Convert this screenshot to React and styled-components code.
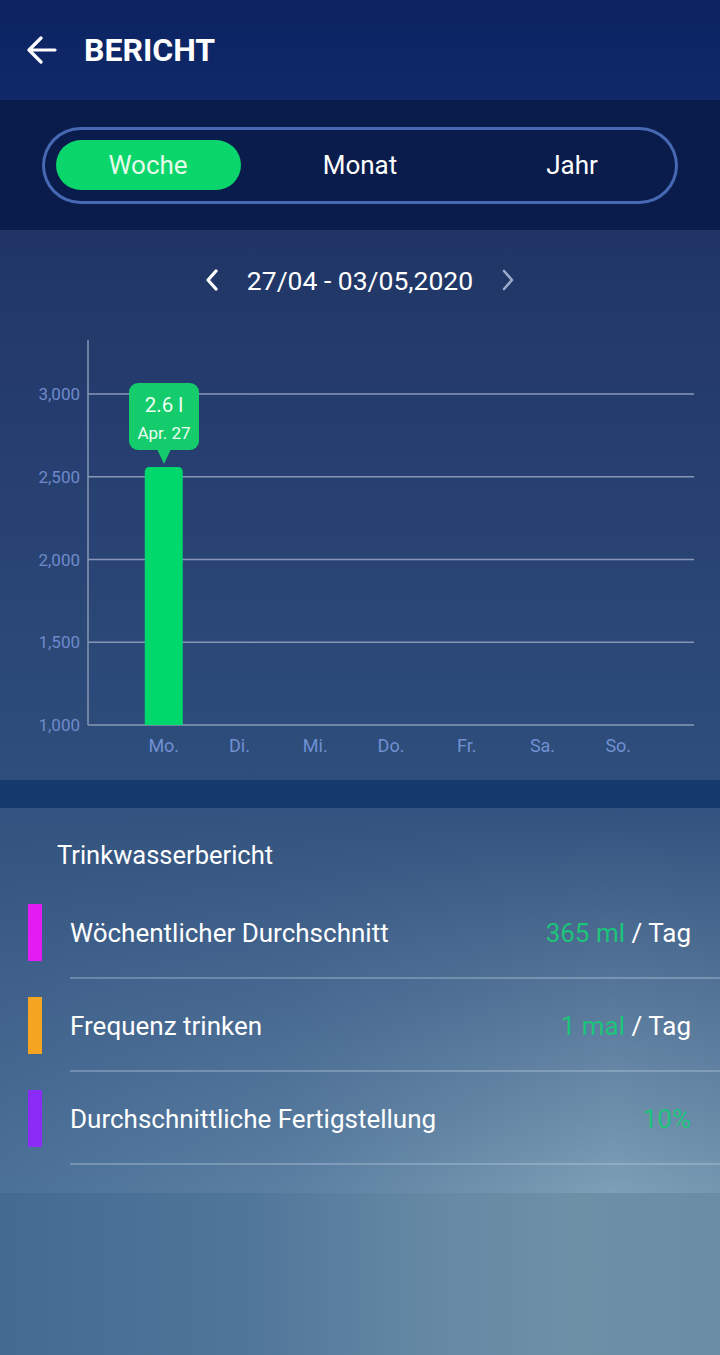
import styled, { createGlobalStyle } from "styled-components";

const GlobalStyle = createGlobalStyle`
  body {
    margin: 0;
    font-family: Roboto, "Noto Sans", sans-serif;
    background: #5d809c;
  }
`;

const days = ["Mo.", "Di.", "Mi.", "Do.", "Fr.", "Sa.", "So."];
const ticks = [3000, 2500, 2000, 1500, 1000];
const stats = [
  { color: "#e21cf2", label: "Wöchentlicher Durchschnitt", value: "365 ml", unit: "/ Tag" },
  { color: "#f6a523", label: "Frequenz trinken", value: "1 mal", unit: "/ Tag" },
  { color: "#8b2cf6", label: "Durchschnittliche Fertigstellung", value: "10%" },
];

// chart geometry (svg coords, svg starts at page y=300)
const plotLeft = 88;
const plotRight = 694;
const yFor = (v) => 425 - ((v - 1000) / 2000) * 331;
const slot = (plotRight - plotLeft) / 8;

const App = () => {
  const barX = plotLeft + slot - 19;
  const barTop = 167;

  return (
    <Page>
      <GlobalStyle />
      <Header>
        <svg width="30" height="28" viewBox="0 0 30 28">
          <path d="M28 14H3M14 2L2 14l12 12" fill="none" stroke="#fff" strokeWidth="3.2" strokeLinecap="round" strokeLinejoin="round" />
        </svg>
        <Title>BERICHT</Title>
      </Header>

      <SegmentBar>
        <Segment>
          <SegmentItem active>Woche</SegmentItem>
          <SegmentItem>Monat</SegmentItem>
          <SegmentItem>Jahr</SegmentItem>
        </Segment>
      </SegmentBar>

      <ChartPanel>
        <DateNav>
          <svg width="14" height="22" viewBox="0 0 14 22">
            <path d="M11 2L3 11l8 9" fill="none" stroke="#fff" strokeWidth="3.2" strokeLinecap="round" strokeLinejoin="round" />
          </svg>
          <DateText>27/04 - 03/05,2020</DateText>
          <svg width="14" height="22" viewBox="0 0 14 22">
            <path d="M3 2l8 9-8 9" fill="none" stroke="#9aabc9" strokeWidth="2.6" strokeLinecap="round" strokeLinejoin="round" />
          </svg>
        </DateNav>
        <svg width="720" height="480" viewBox="0 0 720 480">
          <line x1={plotLeft} y1="40" x2={plotLeft} y2="425" stroke="#8797b6" strokeWidth="1.5" />
          {ticks.map((t) => (
            <g key={t}>
              <line x1={plotLeft} y1={yFor(t)} x2={plotRight} y2={yFor(t)} stroke="#8797b6" strokeWidth="1.5" />
              <text x="80" y={yFor(t) + 6} textAnchor="end" fill="#6e8acb" fontSize="17" fontFamily="Roboto, sans-serif">
                {t.toLocaleString("en-US")}
              </text>
            </g>
          ))}
          <path
            d={`M${barX} 425V${barTop + 5}q0-5 5-5h28q5 0 5 5V425z`}
            fill="#00d86b"
          />
          {days.map((d, i) => (
            <text key={d} x={plotLeft + slot * (i + 1)} y="452" textAnchor="middle" fill="#7090d2" fontSize="18" fontFamily="Roboto, sans-serif">
              {d}
            </text>
          ))}
          <rect x="129" y="83" width="70" height="67" rx="9" fill="#14cc6c" />
          <path d="M157 149h14l-7 15z" fill="#14cc6c" />
          <text x="164" y="112" textAnchor="middle" fill="#ecfff2" fontSize="20.5" fontFamily="Roboto, sans-serif">2.6 l</text>
          <text x="164" y="139" textAnchor="middle" fill="#ecfff2" fontSize="17" fontFamily="Roboto, sans-serif">Apr. 27</text>
        </svg>
      </ChartPanel>

      <Band />

      <ReportPanel>
        <ReportTitle>Trinkwasserbericht</ReportTitle>
        {stats.map((s) => (
          <StatRow key={s.label}>
            <Marker color={s.color} />
            <StatBody>
              <StatLabel>{s.label}</StatLabel>
              <StatValue>
                <Accent>{s.value}</Accent>
                {s.unit && <> {s.unit}</>}
              </StatValue>
            </StatBody>
          </StatRow>
        ))}
      </ReportPanel>
    </Page>
  );
};

const Page = styled.div`
  width: 720px;
  min-height: 1355px;
  display: flex;
  flex-direction: column;
  background: linear-gradient(90deg, #456a90 0%, #50769a 35%, #6589a4 60%, #6e90a7 80%, #6a8ca5 100%);
`;

const Header = styled.header`
  height: 100px;
  box-sizing: border-box;
  padding: 0 0 0 27px;
  display: flex;
  align-items: center;
  gap: 27px;
  background: linear-gradient(180deg, #0b2360 0%, #10296a 100%);
`;

const Title = styled.h1`
  margin: 0;
  color: #fff;
  font-size: 32px;
  font-weight: 700;
`;

const SegmentBar = styled.div`
  height: 130px;
  display: flex;
  align-items: center;
  justify-content: center;
  background: #0a1c4c;
`;

const Segment = styled.div`
  width: 636px;
  height: 77px;
  border-radius: 39px;
  box-shadow: inset 0 0 0 3px #4768b2;
  display: grid;
  grid-template-columns: repeat(3, 1fr);
  align-items: center;
  justify-items: center;
`;

const SegmentItem = styled.div`
  width: 185px;
  height: 50px;
  border-radius: 25px;
  display: flex;
  align-items: center;
  justify-content: center;
  font-size: 26px;
  color: ${(p) => (p.active ? "#e4fbe9" : "#fff")};
  background: ${(p) => (p.active ? "#0bd66b" : "transparent")};
`;

const ChartPanel = styled.section`
  height: 550px;
  box-sizing: border-box;
  padding-top: 30px;
  background: linear-gradient(180deg, #203566 0%, #263f70 40%, #2e4e7c 100%);
  svg {
    display: block;
  }
`;

const DateNav = styled.div`
  height: 40px;
  display: flex;
  align-items: center;
  justify-content: center;
  gap: 28px;
`;

const DateText = styled.span`
  color: #fff;
  font-size: 26.5px;
`;

const Band = styled.div`
  height: 28px;
  background: #163a6e;
`;

const ReportPanel = styled.section`
  box-sizing: border-box;
  padding: 32px 0 28px;
  background:
    linear-gradient(180deg, #33527f 0%, rgba(51, 82, 127, 0.55) 45%, rgba(51, 82, 127, 0) 100%),
    linear-gradient(90deg, #4c7198 0%, #5b80a2 40%, #7698b1 75%, #7d9fb7 85%, #7597b0 100%);
`;

const ReportTitle = styled.h2`
  margin: 0 0 16px 57px;
  font-size: 25.5px;
  line-height: 30px;
  font-weight: 400;
  color: #fff;
`;

const StatRow = styled.div`
  height: 93px;
  display: flex;
  align-items: center;
`;

const Marker = styled.div`
  width: 14px;
  height: 57px;
  margin: 0 28px;
  background: ${(p) => p.color};
`;

const StatBody = styled.div`
  flex: 1;
  height: 100%;
  box-sizing: border-box;
  padding: 3px 29px 0 0;
  display: flex;
  align-items: center;
  justify-content: space-between;
  border-bottom: 2px solid rgba(190, 210, 230, 0.35);
`;

const StatLabel = styled.span`
  color: #fff;
  font-size: 26px;
`;

const StatValue = styled.span`
  color: #fff;
  font-size: 26px;
  white-space: pre;
`;

const Accent = styled.span`
  color: #1cc47a;
`;

export default App;
